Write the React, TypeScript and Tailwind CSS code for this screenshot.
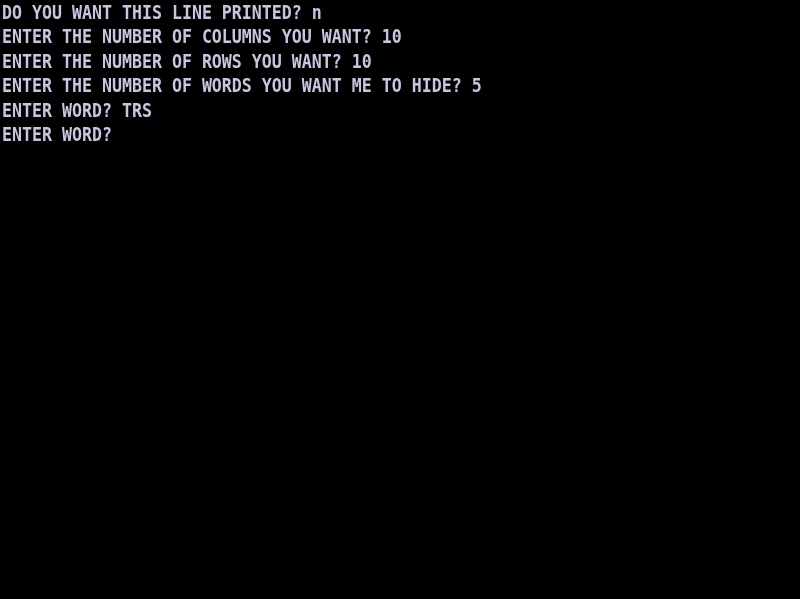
const lines = [
  "DO YOU WANT THIS LINE PRINTED? n",
  "ENTER THE NUMBER OF COLUMNS YOU WANT? 10",
  "ENTER THE NUMBER OF ROWS YOU WANT? 10",
  "ENTER THE NUMBER OF WORDS YOU WANT ME TO HIDE? 5",
  "ENTER WORD? TRS",
  "ENTER WORD?",
]

export default function App() {
  return (
    <div className="w-[800px] h-[599px] bg-black overflow-hidden">
      <div className="pl-[2px] pt-0 font-['DejaVu_Sans_Mono',monospace] font-bold text-[20px] leading-[24.4px] text-[#c6c6de] blur-[0.4px]">
        {lines.map((l) => (
          <div key={l} className="whitespace-pre origin-left scale-x-[0.83]">
            {l}
          </div>
        ))}
      </div>
    </div>
  )
}
